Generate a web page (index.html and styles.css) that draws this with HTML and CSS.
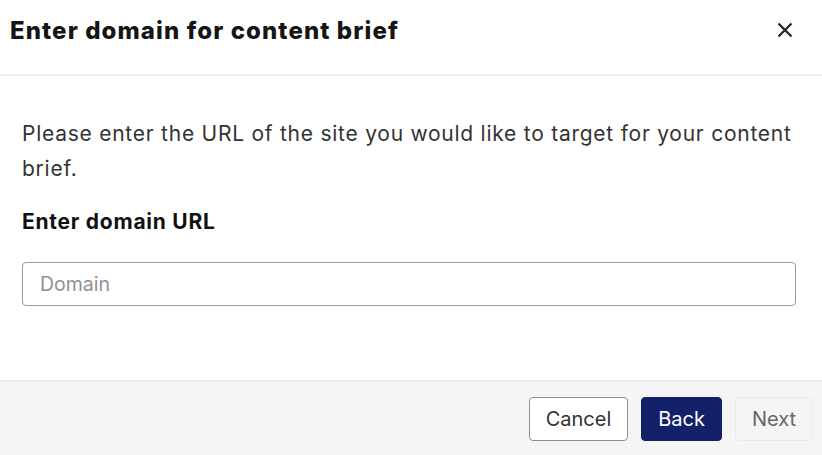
FILE: index.html
```html
<!DOCTYPE html>
<html>
<head>
<meta charset="utf-8">
<link rel="stylesheet" href="styles.css">
</head>
<body>
<div class="modal">
  <div class="header">
    <h1 class="title">Enter domain for content brief</h1>
    <button class="close" aria-label="Close">
      <svg width="16" height="16" viewBox="0 0 16 16"><path d="M1.5 1.5 L14.5 14.5 M14.5 1.5 L1.5 14.5" stroke="#222" stroke-width="2.2" stroke-linecap="butt"/></svg>
    </button>
  </div>
  <div class="body">
    <p class="desc">Please enter the URL of the site you would like to target for your content brief.</p>
    <label class="label" for="domain">Enter domain URL</label>
    <input id="domain" class="input" type="text" placeholder="Domain">
  </div>
  <div class="footer">
    <button class="btn btn-cancel">Cancel</button>
    <button class="btn btn-back">Back</button>
    <button class="btn btn-next" disabled>Next</button>
  </div>
</div>
</body>
</html>
```
FILE: styles.css
```css
html, body { margin: 0; padding: 0; background: #fff; }
body { width: 822px; height: 455px; overflow: hidden; font-family: Inter, "Noto Sans", sans-serif; }
.modal { display: flex; flex-direction: column; height: 455px; }
.header {
  height: 74px; display: flex; align-items: center; justify-content: space-between;
  padding: 0 29px 0 10px; border-bottom: 2px solid #efefef; box-sizing: content-box;
}
.title { margin: 0; font-family: Inter, sans-serif; font-weight: 800; font-size: 24px; color: #151515; letter-spacing: 1.1px; margin-top: -14px; }
.close { background: none; border: 0; padding: 0; width: 16px; height: 16px; margin-top: -14px; cursor: pointer; }
.close svg { display: block; }
.body { flex: 1; padding: 40px 26px 0 22px; display: flex; flex-direction: column; }
.desc { margin: 0; font-size: 21px; line-height: 35px; color: #333; letter-spacing: 0.75px; }
.label { margin-top: 23px; font-weight: 700; font-size: 21px; color: #111; line-height: 26px; letter-spacing: 0.75px; }
.input {
  margin-top: 27px; height: 44px; box-sizing: border-box; border: 1.5px solid #9a9a9a; border-radius: 4px;
  padding: 0 17px; font-family: Inter, sans-serif; font-size: 19.5px; color: #333; outline: none;
}
.input::placeholder { color: #8d8f96; }
.footer {
  height: 73px; background: #f5f5f5; border-top: 2px solid #ededed;
  display: flex; align-items: center; justify-content: flex-end; gap: 13px; padding: 0 9px 0 0;
}
.btn { height: 44px; border-radius: 4px; font-family: Inter, sans-serif; font-size: 20px; padding: 0; box-sizing: border-box; }
.btn-cancel { width: 99px; background: #fff; border: 1.5px solid #8f8f8f; color: #333; }
.btn-back { width: 81px; background: #13216a; border: 1px solid #13216a; color: #fff; }
.btn-next { width: 78px; background: #f5f5f5; border: 1px solid #eaeaea; color: #666; }
```
